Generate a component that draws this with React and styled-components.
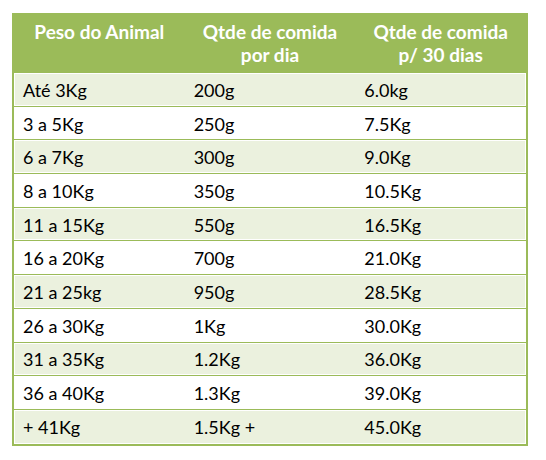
import React from "react";
import styled, { createGlobalStyle } from "styled-components";

const rows = [
  ["Até 3Kg", "200g", "6.0kg"],
  ["3 a 5Kg", "250g", "7.5Kg"],
  ["6 a 7Kg", "300g", "9.0Kg"],
  ["8 a 10Kg", "350g", "10.5Kg"],
  ["11 a 15Kg", "550g", "16.5Kg"],
  ["16 a 20Kg", "700g", "21.0Kg"],
  ["21 a 25kg", "950g", "28.5Kg"],
  ["26 a 30Kg", "1Kg", "30.0Kg"],
  ["31 a 35Kg", "1.2Kg", "36.0Kg"],
  ["36 a 40Kg", "1.3Kg", "39.0Kg"],
  ["+ 41Kg", "1.5Kg +", "45.0Kg"],
];

const GlobalStyle = createGlobalStyle`
  body {
    margin: 0;
    background: #ffffff;
    font-family: Lato, "Open Sans", "Liberation Sans", sans-serif;
  }
`;

const Page = styled.div`
  padding: 13px 0 0 12px;
`;

const Table = styled.table`
  width: 516px;
  border-collapse: separate;
  border-spacing: 0;
  border: 2px solid #9bbb59;
  table-layout: fixed;
`;

const HeadCell = styled.th`
  background: #9bbb59;
  color: #ffffff;
  font-size: 19px;
  font-weight: 700;
  line-height: 22.5px;
  text-align: center;
  vertical-align: top;
  padding: 6px 4px 6px;
  border-bottom: 1px solid #9bbb59;
`;

const Row = styled.tr`
  height: 33.7px;
`;

const Cell = styled.td`
  background: ${(props) => (props.shaded ? "#ebf1de" : "#ffffff")};
  color: #000000;
  font-size: 18px;
  line-height: 22px;
  padding: 1px 9px 0;
  vertical-align: middle;
  border-bottom: ${(props) => (props.last ? "none" : "1px solid #9bbb59")};
  box-shadow: ${(props) =>
    props.shaded ? "inset 0 1px 0 #ffffff, inset 0 -1px 0 #ffffff" : "none"};

  &:first-child {
    box-shadow: ${(props) =>
      props.shaded
        ? "inset 1px 0 0 #ffffff, inset 0 1px 0 #ffffff, inset 0 -1px 0 #ffffff"
        : "none"};
  }

  &:last-child {
    box-shadow: ${(props) =>
      props.shaded
        ? "inset -1px 0 0 #ffffff, inset 0 1px 0 #ffffff, inset 0 -1px 0 #ffffff"
        : "none"};
  }
`;

const App = () => {
  return (
    <Page>
      <GlobalStyle />
      <Table>
        <thead>
          <tr>
            <HeadCell>Peso do Animal</HeadCell>
            <HeadCell>
              Qtde de comida
              <br />
              por dia
            </HeadCell>
            <HeadCell>
              Qtde de comida
              <br />
              p/ 30 dias
            </HeadCell>
          </tr>
        </thead>
        <tbody>
          {rows.map((row, i) => (
            <Row key={row[0]}>
              {row.map((value) => (
                <Cell
                  key={value}
                  shaded={i % 2 === 0}
                  last={i === rows.length - 1}
                >
                  {value}
                </Cell>
              ))}
            </Row>
          ))}
        </tbody>
      </Table>
    </Page>
  );
};

export default App;
